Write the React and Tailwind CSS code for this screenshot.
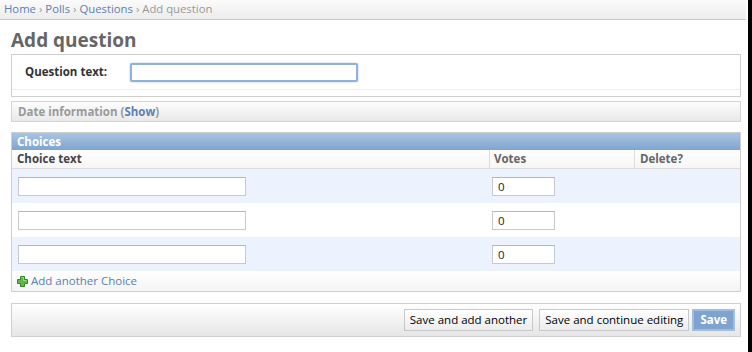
import React from 'react';

const font = { fontFamily: '"Open Sans", "DejaVu Sans", Arial, sans-serif' };

const PlusIcon = () => (
  <svg width="11" height="11" viewBox="0 0 11 11" className="shrink-0">
    <path d="M3.5 0.5h4v3h3v4h-3v3h-4v-3h-3v-4h3z" fill="#5fb843" stroke="#2f8a1f" strokeWidth="1" />
    <path d="M4.5 1.5h2v3h3" fill="none" stroke="#a6e08c" strokeWidth="0.8" />
  </svg>
);

const ChoiceRow = ({ shaded }) => (
  <div className={`flex h-[34px] items-center ${shaded ? 'bg-[#edf3fe]' : 'bg-white'}`}>
    <div className="w-[477px] pl-[6px]">
      <div className="w-[228px] h-[19px] bg-white border border-[#c6c9cf] border-t-[#b3b6bb]" />
    </div>
    <div className="w-[145px] pl-[3px]">
      <div className="w-[63px] h-[19px] bg-white border border-[#c6c9cf] border-t-[#b3b6bb] pl-[5px] text-[11.5px] leading-[17px] text-[#222]">0</div>
    </div>
    <div className="flex-1" />
  </div>
);

export default function App() {
  return (
    <div className="w-[752px] h-[352px] flex bg-white overflow-hidden text-[#333]" style={font}>
      <div className="w-[748px] flex flex-col">
        <div className="h-[20px] pl-[4px] flex items-center bg-gradient-to-b from-[#fbfbfb] to-[#ececec] border-b border-[#c9c9c9] text-[11.3px] text-[#999] mr-[2px]">
          <span className="text-[#5b80b2]">Home</span>
          <span className="mx-[3px]">›</span>
          <span className="text-[#5b80b2]">Polls</span>
          <span className="mx-[3px]">›</span>
          <span className="text-[#5b80b2]">Questions</span>
          <span className="mx-[3px]">›</span>
          <span>Add question</span>
        </div>

        <div className="pl-[11px] pr-[7px] flex flex-col">
          <h1 className="h-[34px] pt-[8px] text-[19px] leading-[24px] font-bold text-[#666]">Add question</h1>

          <div className="h-[43px] border border-[#cfcfcf]">
            <div className="h-[35px] flex items-center border-b border-[#efefef] pl-[13px]">
              <span className="w-[105px] text-[11.5px] font-bold text-[#333]">Question text:</span>
              <div className="w-[228px] h-[19px] bg-white border-2 border-[#8fb1dc] rounded-[2px] shadow-[0_0_2px_#9fc0e8]" />
            </div>
          </div>

          <div className="mt-[4px] h-[21px] border border-[#d4d4d4] bg-gradient-to-b from-[#fdfdfd] to-[#e9e9e9] flex items-center pl-[6px] text-[11.5px] font-bold text-[#999]">
            Date information (<span className="text-[#5b80b2]">Show</span>)
          </div>

          <div className="mt-[10px] h-[160px] border border-[#cfcfcf] flex flex-col">
            <div className="h-[17px] bg-gradient-to-b from-[#a9c5e4] to-[#7fa5cf] flex items-center pl-[5px] text-[11.5px] font-bold text-white">
              Choices
            </div>
            <div className="h-[19px] flex bg-gradient-to-b from-white to-[#f6f6f6] border-b border-[#dcdcdc] text-[11.5px] font-bold">
              <div className="w-[477px] pl-[5px] flex items-center text-[#444]">Choice text</div>
              <div className="w-[145px] pl-[4px] flex items-center border-l border-[#ddd] text-[#666]">Votes</div>
              <div className="flex-1 pl-[5px] flex items-center border-l border-[#ddd] text-[#666]">Delete?</div>
            </div>
            <ChoiceRow shaded />
            <ChoiceRow />
            <ChoiceRow shaded />
            <div className="flex-1 flex items-center pl-[5px] gap-[3px] bg-gradient-to-b from-white to-[#f4f4f4] text-[11.5px] text-[#5b80b2]">
              <PlusIcon />
              <span>Add another Choice</span>
            </div>
          </div>

          <div className="mt-[11px] h-[34px] border border-[#cfcfcf] bg-gradient-to-b from-white to-[#e6e6e6] flex items-center justify-end pr-[5px] text-[11.5px]">
            <button className="h-[22px] px-[5px] mr-[6px] bg-gradient-to-b from-white to-[#ececec] border border-[#c8c8c8] text-black">Save and add another</button>
            <button className="h-[22px] px-[5px] mr-[3px] bg-gradient-to-b from-white to-[#ececec] border border-[#c8c8c8] text-black">Save and continue editing</button>
            <button className="h-[22px] px-[6px] bg-[#7ea3cf] border-2 border-[#a3bddd] font-bold text-white">Save</button>
          </div>
        </div>
      </div>
      <div className="flex-1 bg-black" />
    </div>
  );
}
